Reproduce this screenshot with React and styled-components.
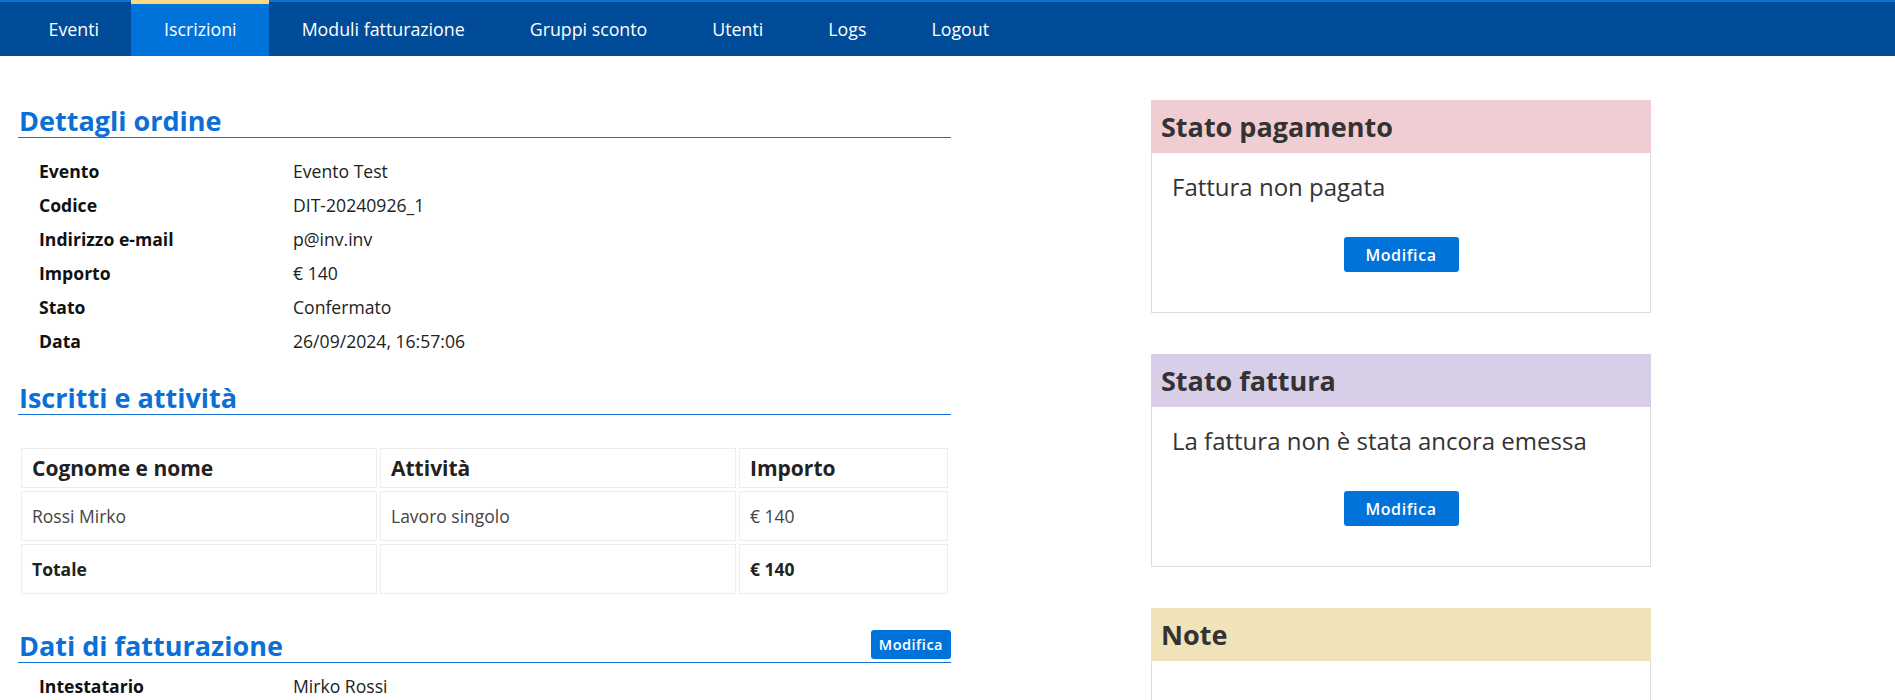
import React from "react";
import styled, { createGlobalStyle } from "styled-components";

const GlobalStyle = createGlobalStyle`
  * {
    box-sizing: border-box;
  }
  body {
    margin: 0;
    background: #fff;
    font-family: "Open Sans", "Noto Sans", sans-serif;
    color: #222;
  }
`;

const tabs = [
  "Eventi",
  "Iscrizioni",
  "Moduli fatturazione",
  "Gruppi sconto",
  "Utenti",
  "Logs",
  "Logout",
];

const orderDetails = [
  ["Evento", "Evento Test"],
  ["Codice", "DIT-20240926_1"],
  ["Indirizzo e-mail", "p@inv.inv"],
  ["Importo", "€ 140"],
  ["Stato", "Confermato"],
  ["Data", "26/09/2024, 16:57:06"],
];

function App() {
  return (
    <>
      <GlobalStyle />
      <Nav>
        <NavList>
          {tabs.map((t) => (
            <NavItem key={t} $active={t === "Iscrizioni"}>
              {t}
            </NavItem>
          ))}
        </NavList>
      </Nav>

      <Main>
        <LeftCol>
          <SectionTitle $top={4}>
            <span>Dettagli ordine</span>
          </SectionTitle>
          <Details $top={16}>
            {orderDetails.map(([k, v]) => (
              <React.Fragment key={k}>
                <Label>{k}</Label>
                <Value>{v}</Value>
              </React.Fragment>
            ))}
          </Details>

          <SectionTitle $top={23}>
            <span>Iscritti e attività</span>
          </SectionTitle>
          <Table>
            <thead>
              <tr>
                <Th $w={356}>Cognome e nome</Th>
                <Th $w={356}>Attività</Th>
                <Th>Importo</Th>
              </tr>
            </thead>
            <tbody>
              <tr>
                <Td>Rossi Mirko</Td>
                <Td>Lavoro singolo</Td>
                <Td>€ 140</Td>
              </tr>
              <tr>
                <Td $bold>Totale</Td>
                <Td></Td>
                <Td $bold>€ 140</Td>
              </tr>
            </tbody>
          </Table>

          <SectionTitle $top={32}>
            <span>Dati di fatturazione</span>
            <SmallButton>Modifica</SmallButton>
          </SectionTitle>
          <Details $top={6}>
            <Label>Intestatario</Label>
            <Value>Mirko Rossi</Value>
          </Details>
        </LeftCol>

        <RightCol>
          <Card>
            <CardHeader $bg="#f0cdd3">Stato pagamento</CardHeader>
            <CardBody>
              <CardText>Fattura non pagata</CardText>
              <Button>Modifica</Button>
            </CardBody>
          </Card>
          <Card>
            <CardHeader $bg="#d9cee8">Stato fattura</CardHeader>
            <CardBody>
              <CardText>La fattura non è stata ancora emessa</CardText>
              <Button>Modifica</Button>
            </CardBody>
          </Card>
          <Card>
            <CardHeader $bg="#f1e3b9">Note</CardHeader>
            <CardBody $min={140} />
          </Card>
        </RightCol>
      </Main>
    </>
  );
}

const Nav = styled.nav`
  height: 56px;
  background-color: #004c98;
  box-shadow: inset 0 2px 0 #0a72d8;
`;

const NavList = styled.ul`
  display: flex;
  height: 100%;
  margin: 0;
  padding: 0 0 0 16px;
  list-style: none;
`;

const NavItem = styled.li`
  display: flex;
  align-items: center;
  height: 100%;
  padding: 2px 32.5px 0;
  font-size: 17.8px;
  color: #fff;
  background-color: ${(p) => (p.$active ? "#0073db" : "transparent")};
  box-shadow: ${(p) => (p.$active ? "inset 0 4px 0 #ffd982" : "none")};
  cursor: pointer;
`;

const Main = styled.main`
  display: grid;
  grid-template-columns: 933px 500px;
  column-gap: 200px;
  align-items: start;
  padding: 44px 0 0 18px;
`;

const LeftCol = styled.div`
  display: flex;
  flex-direction: column;
`;

const SectionTitle = styled.h2`
  display: flex;
  justify-content: space-between;
  align-items: flex-end;
  margin: ${(p) => p.$top}px 0 0;
  padding-left: 1px;
  font-size: 27px;
  line-height: 33px;
  font-weight: 700;
  color: #0b6fd6;
  border-bottom: 1px solid #1470d2;
`;

const Details = styled.div`
  display: grid;
  grid-template-columns: 254px 1fr;
  grid-auto-rows: 34px;
  align-items: center;
  margin-top: ${(p) => p.$top}px;
  padding-left: 21px;
  font-size: 17.6px;
`;

const Label = styled.div`
  font-weight: 700;
  color: #111;
`;

const Value = styled.div`
  color: #222;
`;

const Table = styled.table`
  width: 100%;
  margin-top: 30px;
  border-collapse: separate;
  border-spacing: 3px;
  table-layout: fixed;
`;

const Th = styled.th`
  width: ${(p) => (p.$w ? `${p.$w}px` : "auto")};
  height: 40px;
  padding: 0 10px;
  text-align: left;
  font-size: 21px;
  font-weight: 700;
  color: #222;
  border: 1px solid #ededed;
`;

const Td = styled.td`
  height: 50px;
  padding: 0 10px;
  font-size: 17.5px;
  font-weight: ${(p) => (p.$bold ? 700 : 400)};
  color: ${(p) => (p.$bold ? "#222" : "#444")};
  border: 1px solid #ededed;
`;

const SmallButton = styled.button`
  height: 29px;
  margin-bottom: 3px;
  padding: 0 8px;
  border: none;
  border-radius: 3px;
  background-color: #0073db;
  color: #fff;
  font-family: "Open Sans", sans-serif;
  font-size: 14.5px;
  font-weight: 600;
  letter-spacing: 0.5px;
  cursor: pointer;
`;

const RightCol = styled.div`
  display: flex;
  flex-direction: column;
  gap: 41px;
`;

const Card = styled.section`
  display: flex;
  flex-direction: column;
`;

const CardHeader = styled.h3`
  margin: 0;
  height: 53px;
  padding: 0 10px;
  line-height: 53px;
  font-size: 27px;
  font-weight: 700;
  color: #333;
  background-color: ${(p) => p.$bg};
`;

const CardBody = styled.div`
  min-height: ${(p) => (p.$min ? `${p.$min}px` : "0")};
  padding: 17px 20px 40px;
  border: 1px solid #dcdcdc;
  border-top: none;
`;

const CardText = styled.p`
  margin: 0;
  font-size: 24px;
  line-height: 33px;
  color: #333;
`;

const Button = styled.button`
  display: block;
  width: 115px;
  height: 35px;
  margin: 34px auto 0;
  border: none;
  border-radius: 3px;
  background-color: #0073db;
  color: #fff;
  font-family: "Open Sans", sans-serif;
  font-size: 16px;
  font-weight: 600;
  letter-spacing: 0.6px;
  cursor: pointer;
`;

export default App;
